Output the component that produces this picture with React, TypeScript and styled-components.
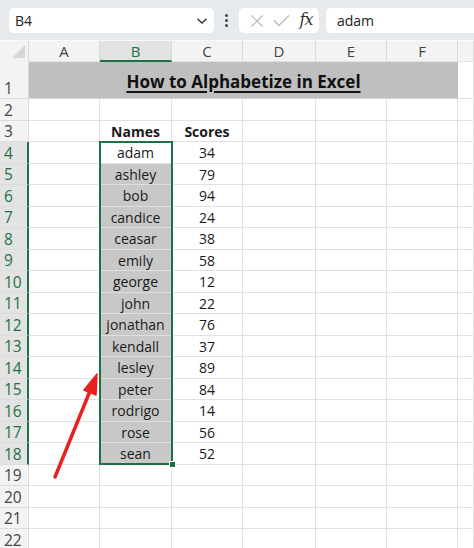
import React from "react";
import styled, { createGlobalStyle } from "styled-components";

const GlobalStyle = createGlobalStyle`
  html, body { margin: 0; padding: 0; background: #ffffff; }
  body { font-family: "Open Sans", "Liberation Sans", sans-serif; overflow: hidden; }
  * { box-sizing: border-box; }
`;

const GREEN = "#1f7145";
const GRID = "#e1e1e1";

const Page = styled.div`
  width: 474px;
  height: 548px;
  overflow: hidden;
  display: flex;
  flex-direction: column;
`;

const Toolbar = styled.div`
  height: 40px;
  flex: none;
  background: #e7eaed;
  display: flex;
  align-items: flex-start;
  padding: 8px 0 0 9px;
  gap: 0;
`;

const NameBox = styled.div`
  width: 205px;
  height: 25px;
  background: #ffffff;
  border-radius: 5px;
  display: flex;
  align-items: center;
  justify-content: space-between;
  padding: 0 6px 0 6px;
  font-size: 14px;
  color: #222;
`;

const Dots = styled.div`
  width: 25px;
  height: 25px;
  display: flex;
  flex-direction: column;
  align-items: center;
  justify-content: center;
  gap: 2px;
`;

const Dot = styled.span`
  width: 3px;
  height: 3px;
  border-radius: 50%;
  background: #444;
`;

const ButtonGroup = styled.div`
  width: 80px;
  height: 25px;
  background: #ffffff;
  border-radius: 5px;
  display: flex;
  align-items: center;
  padding: 0 0 0 7px;
  gap: 0;
`;

const IconSlot = styled.div<{ $w: number }>`
  width: ${(p) => p.$w}px;
  height: 25px;
  display: flex;
  align-items: center;
  justify-content: center;
`;

const Fx = styled.span`
  font-family: "DejaVu Serif", "Liberation Serif", serif;
  font-style: italic;
  font-size: 16px;
  color: #333;
  letter-spacing: -1px;
  line-height: 1;
  margin-top: -2px;
`;

const FormulaInput = styled.div`
  margin-left: 7px;
  flex: 1;
  height: 25px;
  background: #ffffff;
  border-radius: 5px 0 0 5px;
  display: flex;
  align-items: center;
  padding-left: 11px;
  font-size: 14px;
  color: #222;
`;

const Sheet = styled.div`
  position: relative;
  flex: 1;
  display: grid;
  grid-template-columns: 29px 71px 72px 71px 73px 71px 71px 1fr;
  grid-template-rows: 22px 37px 22px 21px repeat(19, 21.5px);
  background: #ffffff;
  overflow: hidden;
`;

const Corner = styled.div`
  background: #f3f3f3;
  border-right: 1px solid #dadada;
  position: relative;
  border-top: 1px solid #fafafa;
`;

const CornerTriangle = styled.div`
  position: absolute;
  right: 3px;
  bottom: 4px;
  width: 0;
  height: 0;
  border-left: 13px solid transparent;
  border-bottom: 13px solid #d6d6d6;
`;

const ColHeader = styled.div<{ $active?: boolean }>`
  background: ${(p) => (p.$active ? "#e3e3e3" : "#f3f3f3")};
  border-right: 1px solid #dadada;
  border-top: 1px solid #fafafa;
  border-bottom: ${(p) => (p.$active ? `2px solid ${GREEN}` : "1px solid #e3e3e3")};
  display: flex;
  align-items: center;
  justify-content: center;
  font-size: 15px;
  color: ${(p) => (p.$active ? GREEN : "#444")};
`;

const RowHeader = styled.div<{ $active?: boolean }>`
  background: ${(p) => (p.$active ? "#e3e3e3" : "#f3f3f3")};
  border-right: ${(p) => (p.$active ? `2px solid ${GREEN}` : "1px solid #dadada")};
  border-bottom: 1px solid #dcdcdc;
  display: flex;
  align-items: flex-end;
  justify-content: flex-start;
  padding: 0 0 1px 4px;
  font-size: 15.5px;
  line-height: 18px;
  color: ${(p) => (p.$active ? GREEN : "#444")};
`;

const TitleCell = styled.div`
  grid-column: span 6;
  background: #bfbfbf;
  border-bottom: 1px solid #d0d0d0;
  display: flex;
  align-items: center;
  justify-content: center;
  padding-top: 2px;
  font-size: 17px;
  font-weight: 700;
  color: #111;
  text-decoration: underline;
  text-decoration-thickness: 2px;
  text-underline-offset: 3px;
`;

const Cell = styled.div<{ $bold?: boolean; $fill?: boolean }>`
  background: ${(p) => (p.$fill ? "#c8c8c8" : "#ffffff")};
  border-right: 1px solid ${(p) => (p.$fill ? "#ececec" : GRID)};
  border-bottom: 1px solid ${(p) => (p.$fill ? "#dedede" : GRID)};
  display: flex;
  align-items: center;
  justify-content: center;
  font-size: 14px;
  font-weight: ${(p) => (p.$bold ? 700 : 400)};
  color: #1a1a1a;
  white-space: nowrap;
  padding-top: 1px;
`;

const Selection = styled.div`
  position: absolute;
  left: 99px;
  top: 101px;
  width: 74px;
  height: 324px;
  border: 2px solid ${GREEN};
  pointer-events: none;
`;

const Handle = styled.div`
  position: absolute;
  right: -5px;
  bottom: -5px;
  width: 7px;
  height: 7px;
  background: ${GREEN};
  border: 1px solid #ffffff;
`;

const ArrowSvg = styled.svg`
  position: absolute;
  left: 0;
  top: 0;
  width: 474px;
  height: 508px;
  pointer-events: none;
`;

const names = [
  "adam", "ashley", "bob", "candice", "ceasar", "emily", "george", "john",
  "jonathan", "kendall", "lesley", "peter", "rodrigo", "rose", "sean",
];
const scores = [34, 79, 94, 24, 38, 58, 12, 22, 76, 37, 89, 84, 14, 56, 52];
const cols = ["A", "B", "C", "D", "E", "F", ""];

function renderRow(r: number) {
  const active = r >= 4 && r <= 18;
  const cells: React.ReactNode[] = [
    <RowHeader key={`h${r}`} $active={active}>{r}</RowHeader>,
  ];
  if (r === 1) {
    cells.push(<TitleCell key="title">How to Alphabetize in Excel</TitleCell>);
    cells.push(<Cell key="g1" />);
    return cells;
  }
  for (let c = 0; c < 7; c++) {
    let content: React.ReactNode = null;
    let bold = false;
    let fill = false;
    if (r === 3 && c === 1) { content = "Names"; bold = true; }
    if (r === 3 && c === 2) { content = "Scores"; bold = true; }
    if (active && c === 1) { content = names[r - 4]; fill = r > 4; }
    if (active && c === 2) { content = scores[r - 4]; }
    cells.push(
      <Cell key={`c${r}-${c}`} $bold={bold} $fill={fill}>{content}</Cell>
    );
  }
  return cells;
}

export default function App() {
  const rows = Array.from({ length: 22 }, (_, i) => i + 1);
  return (
    <Page>
      <GlobalStyle />
      <Toolbar>
        <NameBox>
          <span>B4</span>
          <svg width="12" height="8" viewBox="0 0 12 8">
            <path d="M1.5 1.8 L6 6 L10.5 1.8" fill="none" stroke="#333" strokeWidth="1.3" />
          </svg>
        </NameBox>
        <Dots>
          <Dot />
          <Dot />
          <Dot />
        </Dots>
        <ButtonGroup>
          <IconSlot $w={22}>
            <svg width="14" height="14" viewBox="0 0 14 14">
              <path d="M1.5 1.5 L12.5 12.5 M12.5 1.5 L1.5 12.5" stroke="#b5b5b5" strokeWidth="1.2" fill="none" />
            </svg>
          </IconSlot>
          <IconSlot $w={26}>
            <svg width="17" height="13" viewBox="0 0 17 13">
              <path d="M1 6.5 L6 11.5 L16 1.5" stroke="#b5b5b5" strokeWidth="1.2" fill="none" />
            </svg>
          </IconSlot>
          <IconSlot $w={24}>
            <Fx>fx</Fx>
          </IconSlot>
        </ButtonGroup>
        <FormulaInput>adam</FormulaInput>
      </Toolbar>
      <Sheet>
        <Corner>
          <CornerTriangle />
        </Corner>
        {cols.map((c, i) => (
          <ColHeader key={`col${i}`} $active={c === "B"}>{c}</ColHeader>
        ))}
        {rows.map((r) => renderRow(r))}
        <Selection>
          <Handle />
        </Selection>
        <ArrowSvg viewBox="0 0 474 508">
          <line x1="55" y1="437" x2="90" y2="351" stroke="#e82020" strokeWidth="3.5" strokeLinecap="round" />
          <polygon points="97,334 84,350 96,355" fill="#e82020" stroke="#e82020" strokeWidth="1.5" strokeLinejoin="round" />
        </ArrowSvg>
      </Sheet>
    </Page>
  );
}
